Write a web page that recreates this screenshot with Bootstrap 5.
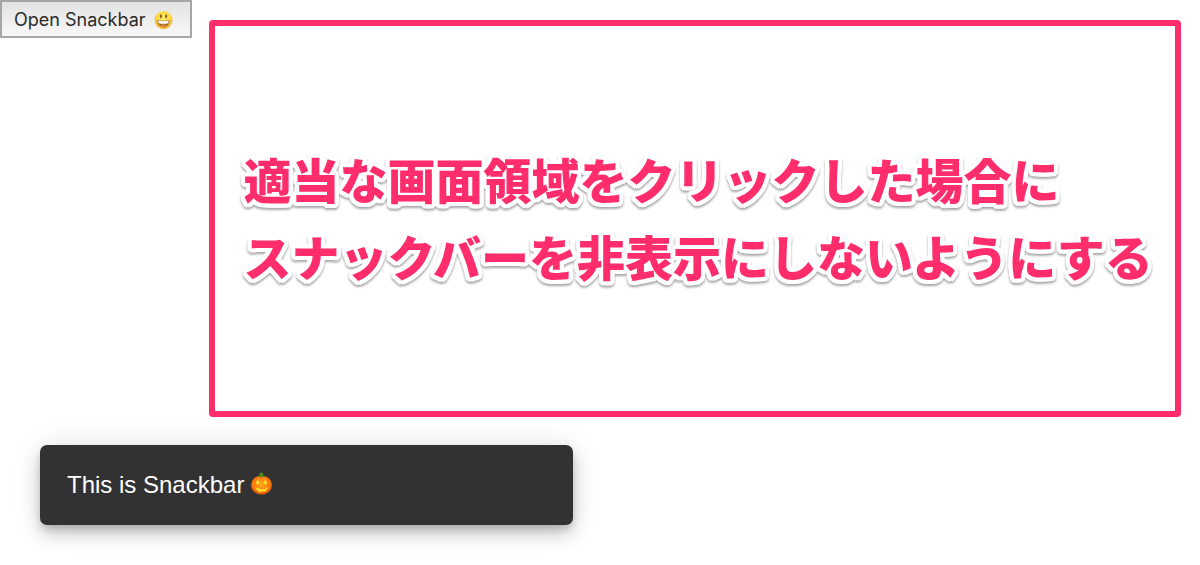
<!DOCTYPE html>
<html lang="ja">
<head>
<meta charset="utf-8">
<meta name="viewport" content="width=device-width, initial-scale=1">
<title>Snackbar</title>
<link href="https://cdn.jsdelivr.net/npm/bootstrap@5.3.0/dist/css/bootstrap.min.css" rel="stylesheet">
<style>
  body { background: #fff; font-family: "Liberation Sans", Arial, sans-serif; }
  .btn-open, .btn-open:hover {
    padding: 5px 17px 3px 12px;
    border: 2px solid #a6a6a6;
    border-radius: 0;
    background: linear-gradient(#e2e2e2, #f8f8f8);
    color: #2b2b2b;
    font: 18px/26px Inter, sans-serif;
  }
  .click-area {
    margin: 20px 19px 28px 17px;
    border: 6px solid #ff2d6c;
    border-radius: 4px;
    padding: 0 16px 3px 29px;
  }
  .message {
    color: #ff2d6c;
    font: 900 48px/77px "Noto Sans CJK JP", sans-serif;
    text-shadow:
      4px 0 #fff, -4px 0 #fff, 0 4px #fff, 0 -4px #fff,
      3px 3px #fff, -3px 3px #fff, 3px -3px #fff, -3px -3px #fff,
      4px 2px #fff, -4px 2px #fff, 4px -2px #fff, -4px -2px #fff,
      2px 4px #fff, -2px 4px #fff, 2px -4px #fff, -2px -4px #fff,
      2px 0 #fff, -2px 0 #fff, 0 2px #fff, 0 -2px #fff;
    filter: drop-shadow(0 2px 1px rgba(0, 0, 0, .35));
  }
  .snackbar {
    width: 533px;
    max-width: calc(100% - 80px);
    margin: 0 40px 40px;
    padding: 22px 27px;
    border-radius: 7px;
    background: #323232;
    color: #fff;
    font-size: 24px;
    line-height: 36px;
    box-shadow: 0 5px 8px -2px rgba(0, 0, 0, .2), 0 10px 17px rgba(0, 0, 0, .14), 0 2px 30px rgba(0, 0, 0, .12);
  }
  .label-gap { gap: 7px; }
</style>
</head>
<body>
<div class="d-flex flex-column min-vh-100">
  <main class="d-flex flex-grow-1 align-items-stretch">
    <button type="button" class="btn btn-open d-flex align-items-center align-self-start text-nowrap flex-shrink-0">
      <span>Open Snackbar</span>
      <svg class="ms-2" width="19" height="19" viewBox="0 0 36 36" role="img" aria-label="😃">
        <defs><radialGradient id="face" cx=".5" cy=".4" r=".6"><stop offset="0" stop-color="#fff06a"/><stop offset=".65" stop-color="#ffd83b"/><stop offset="1" stop-color="#ef9d1c"/></radialGradient></defs>
        <circle cx="18" cy="17" r="17" fill="url(#face)"/>
        <ellipse cx="13" cy="10" rx="2" ry="4" fill="#8a5a20"/>
        <ellipse cx="23" cy="10" rx="2" ry="4" fill="#8a5a20"/>
        <path d="M6 17Q18 20 30 17Q29 30 18 30T6 17Z" fill="#a06a24"/>
        <path d="M8 18Q18 21 28 18L27 23Q18 25 9 23Z" fill="#fff"/>
        <path d="M12 27Q18 24 24 27Q18 31 12 27Z" fill="#e8805a"/>
      </svg>
    </button>
    <section class="click-area flex-grow-1 d-flex align-items-center">
      <p class="message mb-0">適当な画面領域をクリックした場合に<br>スナックバーを非表示にしないようにする</p>
    </section>
  </main>
  <div class="snackbar label-gap d-flex align-items-center" role="status">
    <span>This is Snackbar</span>
    <svg class="mb-1" width="21" height="23" viewBox="0 0 44 48" role="img" aria-label="🎃">
      <defs><radialGradient id="pumpkin" cx=".5" cy=".45" r=".6"><stop offset="0" stop-color="#ffa51c"/><stop offset=".6" stop-color="#ff8510"/><stop offset="1" stop-color="#dc4808"/></radialGradient></defs>
      <ellipse cx="22" cy="27" rx="22" ry="20" fill="url(#pumpkin)"/>
      <path d="M14 9Q2 25 14 43M30 9Q42 25 30 43M22 9V18" fill="none" stroke="#e65c08" stroke-width="1"/>
      <path d="M15 9Q20 8 17 3Q22-1 26 3Q24 7 29 9Q26 12 22 10Q18 12 15 9Z" fill="#4b8420"/>
      <path d="M14 15L18 24Q14 27 10 24ZM30 15L34 24Q30 27 26 24ZM22 25L24 29H20ZM8 31L14 35L18 34L20 37L25 35L29 37L32 34L36 31Q33 40 27 42L24 39L20 42Q11 40 8 31Z" fill="#ffe52e"/>
    </svg>
  </div>
</div>
<script src="https://cdn.jsdelivr.net/npm/bootstrap@5.3.0/dist/js/bootstrap.bundle.min.js"></script>
</body>
</html>
